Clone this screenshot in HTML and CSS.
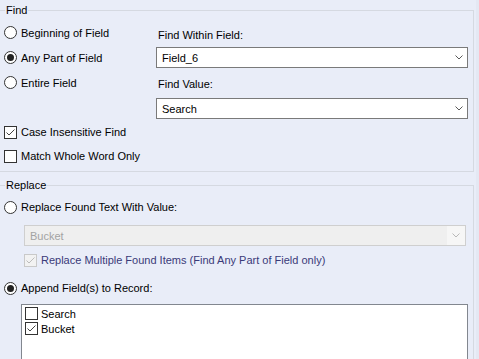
FILE: index.html
```html
<!DOCTYPE html>
<html>
<head>
<meta charset="utf-8">
<link rel="stylesheet" href="styles.css">
</head>
<body>
<div class="page">
  <fieldset class="group find">
    <legend>Find</legend>
    <div class="find-top">
      <div class="col-left">
        <div class="row"><span class="radio"></span>Beginning of Field</div>
        <div class="row"><span class="radio on"></span>Any Part of Field</div>
        <div class="row"><span class="radio"></span>Entire Field</div>
      </div>
      <div class="col-right">
        <div class="lbl lbl-1">Find Within Field:</div>
        <div class="combo combo-1"><span class="val">Field_6</span><svg class="chev" width="8" height="5" viewBox="0 0 8 5"><polyline points="0.5,0.5 4,4 7.5,0.5" fill="none" stroke="#5a5a5a" stroke-width="1"/></svg></div>
        <div class="lbl lbl-2">Find Value:</div>
        <div class="combo combo-2"><span class="val">Search</span><svg class="chev" width="8" height="5" viewBox="0 0 8 5"><polyline points="0.5,0.5 4,4 7.5,0.5" fill="none" stroke="#5a5a5a" stroke-width="1"/></svg></div>
      </div>
    </div>
    <div class="row chk-row first"><span class="check"><svg width="11" height="11" viewBox="0 0 11 11"><polyline points="1.5,5.5 4,8 9.5,2.5" fill="none" stroke="#444" stroke-width="1"/></svg></span>Case Insensitive Find</div>
    <div class="row chk-row"><span class="check"></span>Match Whole Word Only</div>
  </fieldset>

  <fieldset class="group replace">
    <legend>Replace</legend>
    <div class="row rep-row"><span class="radio"></span>Replace Found Text With Value:</div>
    <div class="combo disabled"><span class="val">Bucket</span><span class="btn"><svg class="chev" width="8" height="5" viewBox="0 0 8 5"><polyline points="0.5,0.5 4,4 7.5,0.5" fill="none" stroke="#b8b8b8" stroke-width="1"/></svg></span></div>
    <div class="row multi-row"><span class="check dis"><svg width="11" height="11" viewBox="0 0 11 11"><polyline points="1.5,5.5 4,8 9.5,2.5" fill="none" stroke="#bcbcbc" stroke-width="1"/></svg></span><span class="dis-text">Replace Multiple Found Items (Find Any Part of Field only)</span></div>
    <div class="row append-row"><span class="radio on"></span>Append Field(s) to Record:</div>
    <div class="listbox">
      <div class="item"><span class="check"></span>Search</div>
      <div class="item"><span class="check"><svg width="11" height="11" viewBox="0 0 11 11"><polyline points="1.5,5.5 4,8 9.5,2.5" fill="none" stroke="#444" stroke-width="1"/></svg></span>Bucket</div>
    </div>
  </fieldset>
</div>
</body>
</html>
```

FILE: styles.css
```css
html, body {
  margin: 0;
  padding: 0;
}
body {
  background: #e4e8f3;
  font-family: "Liberation Sans", Arial, sans-serif;
  font-size: 11px;
  color: #000;
  width: 479px;
  height: 359px;
  overflow: hidden;
}
.page {
  width: 476px;
  height: 359px;
  background: #e9edf8;
  overflow: hidden;
}
.group {
  margin: 0 0 0 -1px;
  padding: 0;
  width: 473px;
  border: 1px solid #d5d9e1;
  min-width: 0;
}
.group legend {
  margin-left: 5px;
  padding: 0 1px;
  line-height: 15px;
  height: 15px;
}
.find {
  margin-top: 3px;
  padding-bottom: 3px;
}
.replace {
  margin-top: 6px;
  height: 200px;
}
.find-top {
  display: flex;
}
.col-left {
  width: 156px;
  padding-top: 2px;
}
.row {
  display: flex;
  align-items: center;
  height: 25px;
  padding-left: 4px;
  white-space: nowrap;
}
.radio {
  width: 11px;
  height: 11px;
  border: 1px solid #333;
  border-radius: 50%;
  background: #fff;
  margin-right: 4px;
  flex: none;
  display: flex;
  align-items: center;
  justify-content: center;
}
.radio.on::after {
  content: "";
  width: 7px;
  height: 7px;
  border-radius: 50%;
  background: #222;
}
.check {
  width: 11px;
  height: 11px;
  border: 1px solid #333;
  background: #fff;
  margin-right: 4px;
  flex: none;
  display: flex;
}
.check.dis {
  border-color: #c9c9c9;
  background: #f2f2f2;
}
.col-right {
  width: 312px;
  padding-top: 2px;
}
.lbl {
  height: 14px;
  line-height: 14px;
  padding-left: 2px;
}
.lbl-1 { margin-top: 8px; }
.lbl-2 { margin-top: 9px; }
.combo {
  height: 19px;
  border: 1px solid #7a7a7a;
  background: #fff;
  display: flex;
  align-items: center;
  justify-content: space-between;
  padding-left: 5px;
  padding-right: 4px;
}
.combo-1 { margin-top: 5px; }
.combo-2 { margin-top: 7px; }
.chk-row {
  height: 24px;
}
.chk-row.first {
  margin-top: 1px;
}
.rep-row {
  margin-top: 2px;
  height: 24px;
}
.combo.disabled {
  margin: 6px 0 0 24px;
  width: 435px;
  background: #efefef;
  border-color: #cfcfcf;
  color: #a3a3a3;
  padding-right: 0;
}
.combo .btn {
  width: 18px;
  height: 19px;
  background: #f6f6f6;
  display: flex;
  align-items: center;
  justify-content: center;
}
.multi-row {
  margin-top: 2px;
  height: 24px;
  padding-left: 24px;
}
.dis-text {
  color: #3a3a78;
}
.append-row {
  margin-top: 4px;
  height: 24px;
}
.listbox {
  margin: 4px 0 0 21px;
  width: 445px;
  height: 70px;
  border: 1px solid #82878f;
  background: #fff;
  padding-top: 1px;
}
.item {
  display: flex;
  align-items: center;
  height: 15px;
  padding-left: 3px;
}
.item .check {
  margin-right: 3px;
}
```
